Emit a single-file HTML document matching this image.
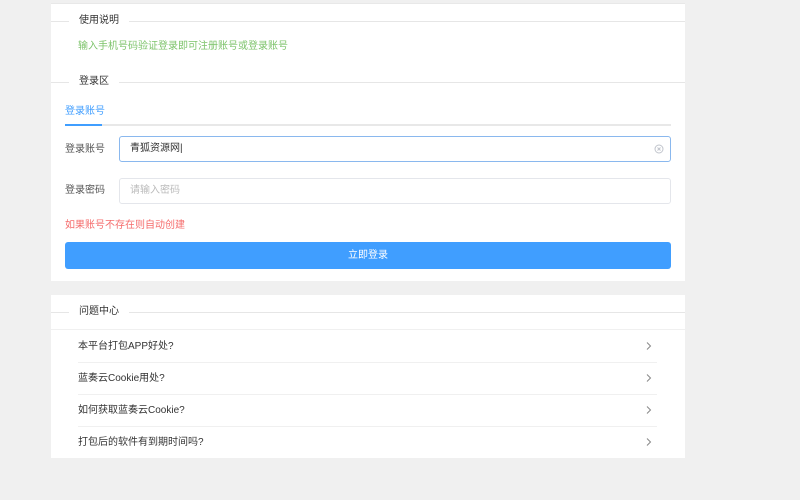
<!DOCTYPE html>
<html><head><meta charset="utf-8"><style>
*{margin:0;padding:0;box-sizing:border-box}
body{width:800px;height:500px;background:#f0f0f0;font-family:"Liberation Sans","Noto Sans CJK SC",sans-serif;font-size:10px;color:#333;position:relative;overflow:hidden}
.card{position:absolute;left:51px;width:634px;background:#fff}
.abs{position:absolute}
.line{position:absolute;height:1px;background:#e6e6e6}
.leg{position:absolute;background:#fff;padding:0 10px;color:#333;line-height:14px}
</style></head><body>
<div class="card" style="top:3px;height:278px;border-top:1px solid #e8e8e8">
  <div class="line" style="left:0;right:0;top:17px"></div>
  <div class="leg" style="left:18px;top:10px">使用说明</div>
  <div class="abs" style="left:27px;top:36px;color:#7cc36a;line-height:14px">输入手机号码验证登录即可注册账号或登录账号</div>
  <div class="line" style="left:0;right:0;top:78px"></div>
  <div class="leg" style="left:18px;top:71px">登录区</div>
  <div class="abs" style="left:14px;top:101px;color:#409eff;line-height:14px">登录账号</div>
  <div class="line" style="left:14px;width:606px;top:120px;height:2px;background:#e8e8e8"></div>
  <div class="abs" style="left:14px;top:120px;width:37px;height:2px;background:#409eff"></div>
  <div class="abs" style="left:14px;top:139px;line-height:14px;color:#555">登录账号</div>
  <div class="abs" style="left:68px;top:132px;width:552px;height:26px;border:1px solid #8ab8ee;border-radius:3px;padding-left:10px;line-height:24px;color:#333">青狐资源网|
    <svg class="abs" style="right:6px;top:7px" width="10" height="10" viewBox="0 0 10 10"><circle cx="5" cy="5" r="4" fill="none" stroke="#c0c4cc" stroke-width="1"/><path d="M3.5 3.5L6.5 6.5M6.5 3.5L3.5 6.5" stroke="#c0c4cc" stroke-width="1"/></svg>
  </div>
  <div class="abs" style="left:14px;top:180px;line-height:14px;color:#555">登录密码</div>
  <div class="abs" style="left:68px;top:174px;width:552px;height:26px;border:1px solid #e4e6eb;border-radius:3px;padding-left:10px;line-height:24px;color:#bbb">请输入密码</div>
  <div class="abs" style="left:14px;top:215px;color:#f56c6c;line-height:14px">如果账号不存在则自动创建</div>
  <div class="abs" style="left:14px;top:238px;width:606px;height:27px;background:#409eff;border-radius:3px;color:#fff;text-align:center;line-height:27px">立即登录</div>
</div>
<div class="card" style="top:295px;height:163px">
  <div class="line" style="left:0;right:0;top:17px"></div>
  <div class="leg" style="left:18px;top:10px">问题中心</div>
  <div class="line" style="left:0;right:0;top:34px;background:#f0f0f0"></div>
  <div class="abs" style="left:27px;top:45px;line-height:14px">本平台打包APP好处?</div>
  <div class="line" style="left:27px;width:579px;top:67px;background:#f0f0f0"></div>
  <div class="abs" style="left:27px;top:77px;line-height:14px">蓝奏云Cookie用处?</div>
  <div class="line" style="left:27px;width:579px;top:99px;background:#f0f0f0"></div>
  <div class="abs" style="left:27px;top:109px;line-height:14px">如何获取蓝奏云Cookie?</div>
  <div class="line" style="left:27px;width:579px;top:131px;background:#f0f0f0"></div>
  <div class="abs" style="left:27px;top:141px;line-height:14px">打包后的软件有到期时间吗?</div>
  <svg class="abs" style="left:594px;top:47px" width="8" height="110" viewBox="0 0 8 110"><g fill="none" stroke="#888" stroke-width="1"><path d="M2 0.5L5.5 4L2 7.5"/><path d="M2 32.5L5.5 36L2 39.5"/><path d="M2 64.5L5.5 68L2 71.5"/><path d="M2 96.5L5.5 100L2 103.5"/></g></svg>
</div>
</body></html>
